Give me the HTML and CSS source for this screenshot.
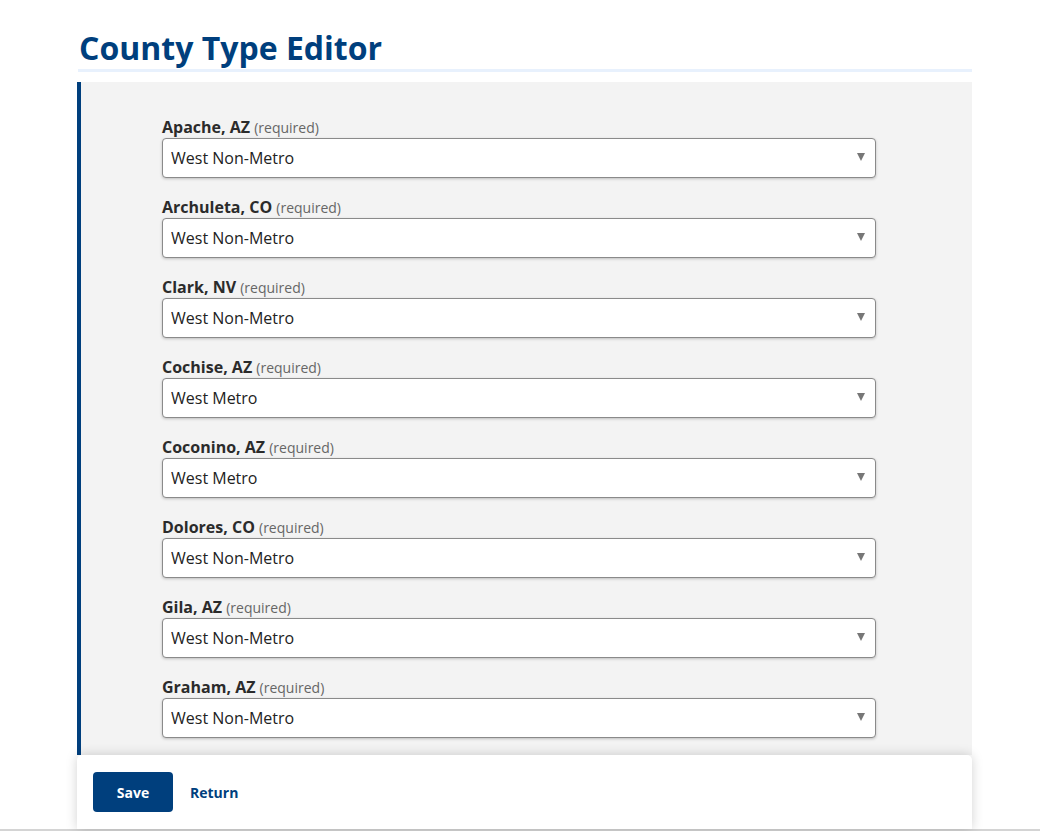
FILE: index.html
```html
<!DOCTYPE html>
<html lang="en">
<head>
  <meta charset="UTF-8" />
  <title>County Type Editor</title>
  <link rel="stylesheet" href="styles.css">
</head>
<body>

  <div class="page">
    <h1 class="page-title">County Type Editor</h1>

    <form class="editor">
      <div class="field">
        <label for="c1">Apache, AZ <span class="req">(required)</span></label>
        <div class="select-wrap">
          <select id="c1"><option>West Non-Metro</option><option>West Metro</option></select>
        </div>
      </div>
      <div class="field">
        <label for="c2">Archuleta, CO <span class="req">(required)</span></label>
        <div class="select-wrap">
          <select id="c2"><option>West Non-Metro</option><option>West Metro</option></select>
        </div>
      </div>
      <div class="field">
        <label for="c3">Clark, NV <span class="req">(required)</span></label>
        <div class="select-wrap">
          <select id="c3"><option>West Non-Metro</option><option>West Metro</option></select>
        </div>
      </div>
      <div class="field">
        <label for="c4">Cochise, AZ <span class="req">(required)</span></label>
        <div class="select-wrap">
          <select id="c4"><option>West Metro</option><option>West Non-Metro</option></select>
        </div>
      </div>
      <div class="field">
        <label for="c5">Coconino, AZ <span class="req">(required)</span></label>
        <div class="select-wrap">
          <select id="c5"><option>West Metro</option><option>West Non-Metro</option></select>
        </div>
      </div>
      <div class="field">
        <label for="c6">Dolores, CO <span class="req">(required)</span></label>
        <div class="select-wrap">
          <select id="c6"><option>West Non-Metro</option><option>West Metro</option></select>
        </div>
      </div>
      <div class="field">
        <label for="c7">Gila, AZ <span class="req">(required)</span></label>
        <div class="select-wrap">
          <select id="c7"><option>West Non-Metro</option><option>West Metro</option></select>
        </div>
      </div>
      <div class="field">
        <label for="c8">Graham, AZ <span class="req">(required)</span></label>
        <div class="select-wrap">
          <select id="c8"><option>West Non-Metro</option><option>West Metro</option></select>
        </div>
      </div>
    </form>

    <div class="actions">
      <button type="button" class="btn-save">Save</button>
      <a href="#" class="link-return">Return</a>
    </div>
  </div>

  <div class="viewport-edge"></div>

</body>
</html>
```

FILE: styles.css
```css
* {
  box-sizing: border-box;
}
html, body {
  margin: 0;
  padding: 0;
  font-family: 'Open Sans', 'Noto Sans', Arial, sans-serif;
  background-color: #ffffff;
  color: #333;
  height: 100%;
}
body {
  display: flex;
  flex-direction: column;
  overflow: hidden;
}
.page {
  flex: 1;
  min-height: 0;
  display: flex;
  flex-direction: column;
  width: 895px;
  margin-left: 77px;
}
.page-title {
  margin: 0 0 10px 1px;
  padding: 28px 0 1px 1px;
  font-size: 32px;
  line-height: 40px;
  font-weight: 700;
  color: #003f7d;
  border-bottom: 3px solid #e8f1fd;
}
.editor {
  flex: 1;
  min-height: 0;
  overflow: hidden;
  background-color: #f3f3f3;
  border-left: 4px solid #003f7d;
  padding: 36px 96px 0 81px;
}
.field {
  margin-bottom: 20px;
}
.field label {
  display: block;
  height: 18px;
  font-size: 16px;
  line-height: 18px;
  font-weight: 700;
  color: #2b2b2b;
  margin-bottom: 2px;
}
.field .req {
  font-size: 14px;
  line-height: 18px;
  font-weight: 400;
  color: #666;
}
.select-wrap {
  position: relative;
}
.select-wrap select {
  -webkit-appearance: none;
  appearance: none;
  display: block;
  width: 100%;
  height: 40px;
  padding: 0 30px 0 8px;
  font-family: inherit;
  font-size: 16px;
  color: #222;
  background: #fff;
  border: 1px solid #8a8a8a;
  border-radius: 4px;
  box-shadow: 0 1px 3px rgba(0, 0, 0, 0.22);
}
.select-wrap::after {
  content: "";
  position: absolute;
  right: 11px;
  top: 15px;
  border-left: 4px solid transparent;
  border-right: 4px solid transparent;
  border-top: 8px solid #777;
  pointer-events: none;
}
.actions {
  flex: none;
  display: flex;
  align-items: center;
  gap: 17px;
  height: 74px;
  padding: 0 16px;
  background: #fff;
  border-radius: 5px 5px 0 0;
  box-shadow: 0 0 12px rgba(0, 0, 0, 0.18);
  position: relative;
}
.btn-save {
  width: 80px;
  height: 40px;
  border: none;
  border-radius: 4px;
  background-color: #003f7d;
  color: #fff;
  font-family: inherit;
  font-weight: 700;
  font-size: 14px;
  cursor: pointer;
}
.link-return {
  color: #003f7d;
  font-weight: 700;
  font-size: 14px;
  text-decoration: none;
}
.viewport-edge {
  flex: none;
  height: 2px;
  background: #d4d4d4;
}
```
